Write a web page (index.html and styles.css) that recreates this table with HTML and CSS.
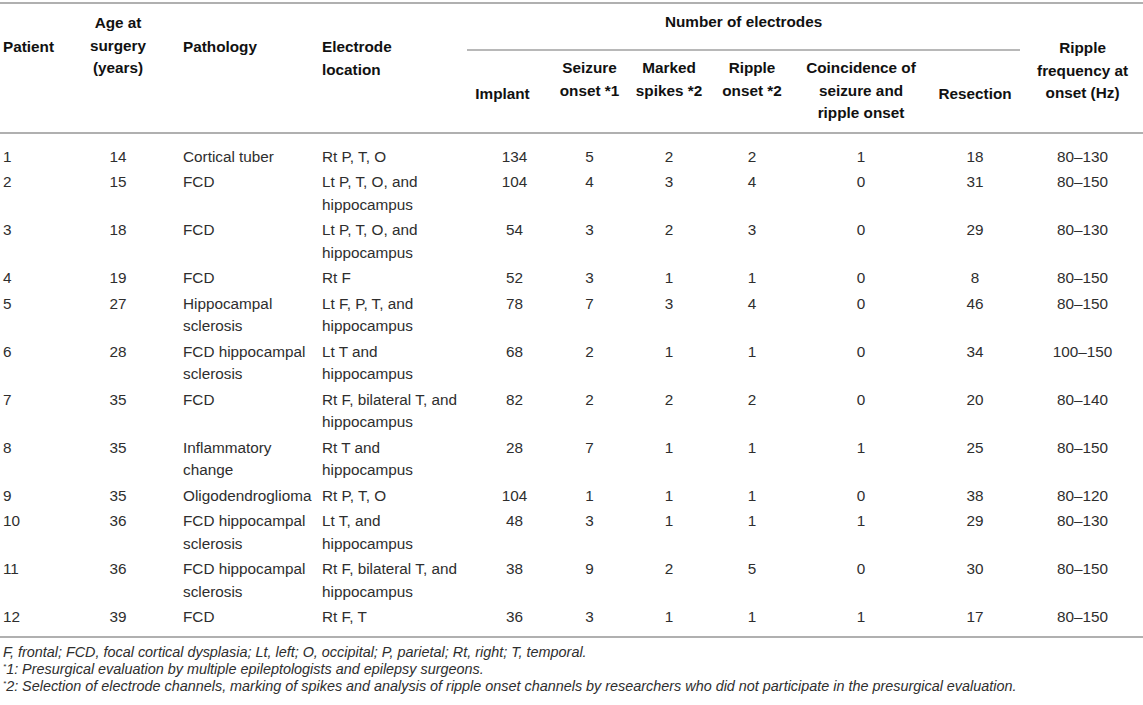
FILE: index.html
```html
<!DOCTYPE html>
<html>
<head>
  <title>Electrode table</title>
  <link rel="stylesheet" href="styles.css">
</head>
<body>
  <table class="grid">
    <colgroup>
      <col class="c1"><col class="c2"><col class="c3"><col class="c4"><col class="c5"><col class="c6">
      <col class="c7"><col class="c8"><col class="c9"><col class="c10"><col class="c11">
    </colgroup>
    <thead>
      <tr class="top">
        <th rowspan="2" class="lft pad-one">Patient</th>
        <th rowspan="2" class="pad-age">Age at<br>surgery<br>(years)</th>
        <th rowspan="2" class="lft path pad-one">Pathology</th>
        <th rowspan="2" class="lft loc pad-one">Electrode<br>location</th>
        <th colspan="6" class="group"><div class="group-line">Number of electrodes</div></th>
        <th rowspan="2" class="pad-freq">Ripple<br>frequency at<br>onset (Hz)</th>
      </tr>
      <tr class="sub">
        <th class="low imp">Implant</th>
        <th>Seizure<br>onset *1</th>
        <th>Marked<br>spikes *2</th>
        <th>Ripple<br>onset *2</th>
        <th class="tall">Coincidence of<br>seizure and<br>ripple onset</th>
        <th class="low">Resection</th>
      </tr>
    </thead>
    <tbody>
      <tr>
        <td class="lft">1</td><td>14</td><td class="lft path">Cortical tuber</td><td class="lft loc">Rt P, T, O</td>
        <td class="imp">134</td><td>5</td><td>2</td><td>2</td><td>1</td><td>18</td><td>80–130</td>
      </tr>
      <tr>
        <td class="lft">2</td><td>15</td><td class="lft path">FCD</td><td class="lft loc">Lt P, T, O, and<br>hippocampus</td>
        <td class="imp">104</td><td>4</td><td>3</td><td>4</td><td>0</td><td>31</td><td>80–150</td>
      </tr>
      <tr>
        <td class="lft">3</td><td>18</td><td class="lft path">FCD</td><td class="lft loc">Lt P, T, O, and<br>hippocampus</td>
        <td class="imp">54</td><td>3</td><td>2</td><td>3</td><td>0</td><td>29</td><td>80–130</td>
      </tr>
      <tr>
        <td class="lft">4</td><td>19</td><td class="lft path">FCD</td><td class="lft loc">Rt F</td>
        <td class="imp">52</td><td>3</td><td>1</td><td>1</td><td>0</td><td>8</td><td>80–150</td>
      </tr>
      <tr>
        <td class="lft">5</td><td>27</td><td class="lft path">Hippocampal<br>sclerosis</td><td class="lft loc">Lt F, P, T, and<br>hippocampus</td>
        <td class="imp">78</td><td>7</td><td>3</td><td>4</td><td>0</td><td>46</td><td>80–150</td>
      </tr>
      <tr>
        <td class="lft">6</td><td>28</td><td class="lft path">FCD hippocampal<br>sclerosis</td><td class="lft loc">Lt T and<br>hippocampus</td>
        <td class="imp">68</td><td>2</td><td>1</td><td>1</td><td>0</td><td>34</td><td>100–150</td>
      </tr>
      <tr>
        <td class="lft">7</td><td>35</td><td class="lft path">FCD</td><td class="lft loc">Rt F, bilateral T, and<br>hippocampus</td>
        <td class="imp">82</td><td>2</td><td>2</td><td>2</td><td>0</td><td>20</td><td>80–140</td>
      </tr>
      <tr>
        <td class="lft">8</td><td>35</td><td class="lft path">Inflammatory<br>change</td><td class="lft loc">Rt T and<br>hippocampus</td>
        <td class="imp">28</td><td>7</td><td>1</td><td>1</td><td>1</td><td>25</td><td>80–150</td>
      </tr>
      <tr>
        <td class="lft">9</td><td>35</td><td class="lft path">Oligodendroglioma</td><td class="lft loc">Rt P, T, O</td>
        <td class="imp">104</td><td>1</td><td>1</td><td>1</td><td>0</td><td>38</td><td>80–120</td>
      </tr>
      <tr>
        <td class="lft">10</td><td>36</td><td class="lft path">FCD hippocampal<br>sclerosis</td><td class="lft loc">Lt T, and<br>hippocampus</td>
        <td class="imp">48</td><td>3</td><td>1</td><td>1</td><td>1</td><td>29</td><td>80–130</td>
      </tr>
      <tr>
        <td class="lft">11</td><td>36</td><td class="lft path">FCD hippocampal<br>sclerosis</td><td class="lft loc">Rt F, bilateral T, and<br>hippocampus</td>
        <td class="imp">38</td><td>9</td><td>2</td><td>5</td><td>0</td><td>30</td><td>80–150</td>
      </tr>
      <tr>
        <td class="lft">12</td><td>39</td><td class="lft path">FCD</td><td class="lft loc">Rt F, T</td>
        <td class="imp">36</td><td>3</td><td>1</td><td>1</td><td>1</td><td>17</td><td>80–150</td>
      </tr>
    </tbody>
  </table>

  <div class="notes">
    <p>F, frontal; FCD, focal cortical dysplasia; Lt, left; O, occipital; P, parietal; Rt, right; T, temporal.</p>
    <p><sup>*</sup>1: Presurgical evaluation by multiple epileptologists and epilepsy surgeons.</p>
    <p><sup>*</sup>2: Selection of electrode channels, marking of spikes and analysis of ripple onset channels by researchers who did not participate in the presurgical evaluation.</p>
  </div>
</body>
</html>
```

FILE: styles.css
```css
body {
  margin: 0;
  background: #fff;
  font-family: "Liberation Sans", Arial, sans-serif;
  color: #2e2e2e;
}

.grid {
  width: 1143px;
  table-layout: fixed;
  border-collapse: collapse;
  margin-top: 2px;
  font-size: 15.3px;
  line-height: 22.5px;
}

.c1 { width: 70px; }
.c2 { width: 96px; }
.c3 { width: 146px; }
.c4 { width: 148px; }
.c5 { width: 91px; }
.c6 { width: 77px; }
.c7 { width: 82px; }
.c8 { width: 84px; }
.c9 { width: 134px; }
.c10 { width: 94px; }
.c11 { width: 121px; }

thead {
  border-top: 2px solid #b0b0b0;
  border-bottom: 2px solid #b0b0b0;
}

tbody {
  border-bottom: 2px solid #b0b0b0;
}

th, td {
  padding: 0;
  text-align: center;
  vertical-align: top;
  white-space: nowrap;
}

th {
  font-weight: bold;
  color: #111;
}

.lft { text-align: left; padding-left: 3px; }
.path { padding-left: 17px; }
.loc { padding-left: 10px; }

.pad-one { padding-top: 32px; }
.pad-age { padding-top: 8px; }
.pad-freq { padding-top: 33px; }

.group {
  padding: 0;
}
.group-line {
  margin: 0 2px 0 7px;
  padding: 7px 0 15.5px;
  border-bottom: 2px solid #b8b8b8;
}

.sub th {
  padding-top: 6px;
}
.sub th.low {
  padding-top: 32px;
}
.sub th.tall {
  padding-bottom: 7.5px;
}
.sub th.imp {
  padding-right: 6px;
}

td {
  padding-top: 1.5px;
  padding-bottom: 1.5px;
}
td.imp {
  padding-left: 18px;
}
tbody tr:first-child td {
  padding-top: 11.5px;
}
tbody tr:last-child td {
  padding-bottom: 7px;
}

.notes {
  margin-top: 6px;
  padding-left: 3px;
  font-size: 14.4px;
  line-height: 17px;
  font-style: italic;
  color: #2e2e2e;
}
.notes p {
  margin: 0;
}
.notes sup {
  font-size: 8px;
  line-height: 0;
  vertical-align: 5px;
}
```
